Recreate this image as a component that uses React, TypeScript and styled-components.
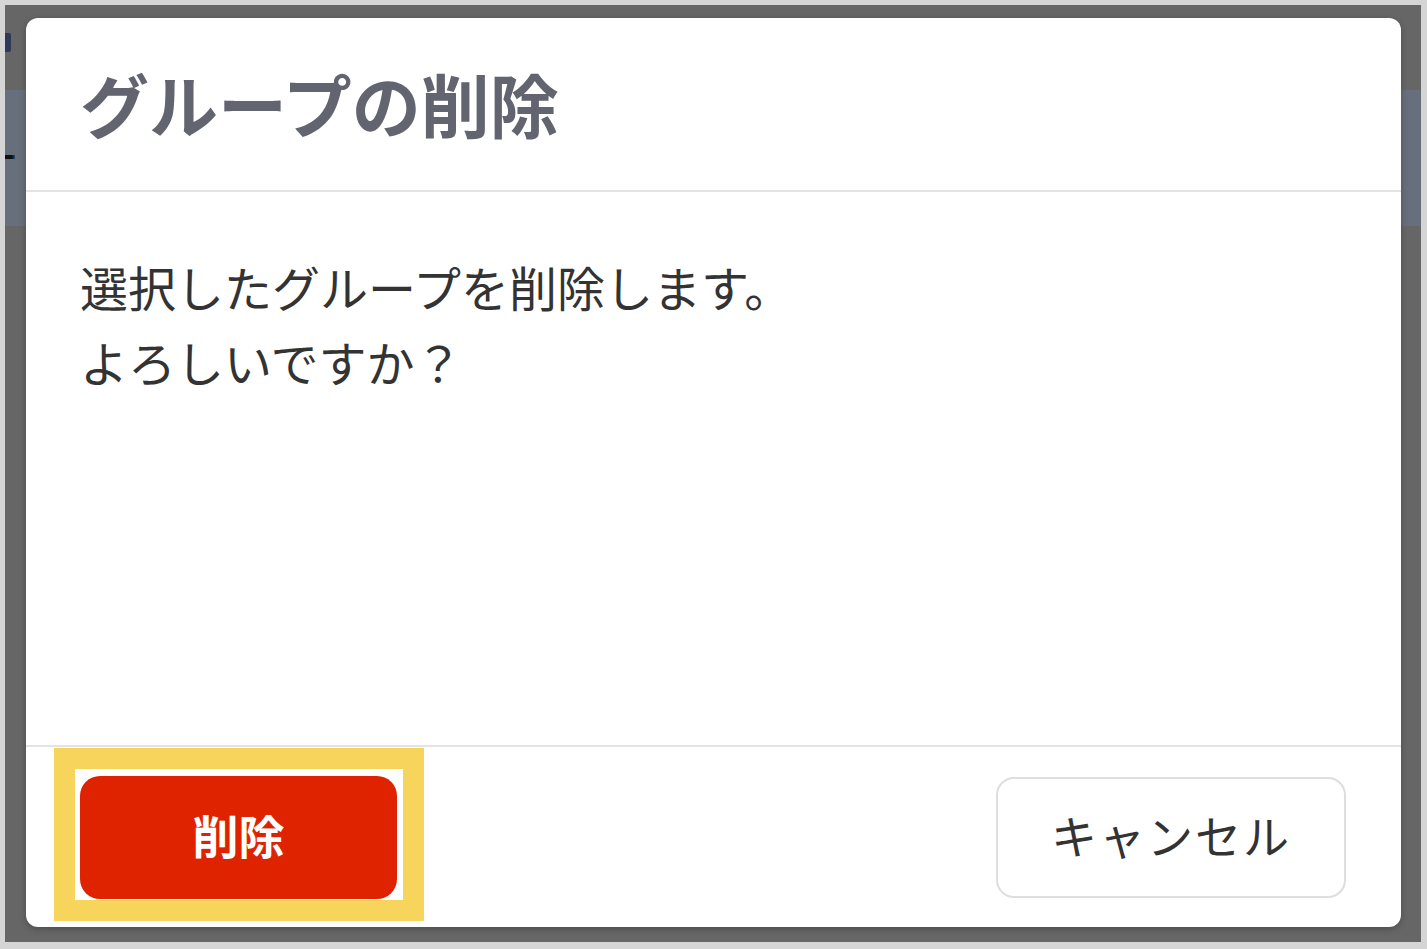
import styled, { createGlobalStyle } from 'styled-components';

const GlobalStyle = createGlobalStyle`
	html, body {
		margin: 0;
		padding: 0;
		background: #ffffff;
	}
	* {
		box-sizing: border-box;
	}
`

const Frame = styled.div`
	position: relative;
	width: 1427px;
	height: 949px;
	border-style: solid;
	border-color: #d5d5d5;
	border-width: 5px 6px 7px 5px;
	background-color: #666666;
	overflow: hidden;
	font-family: "Noto Sans CJK JP", "Noto Sans", sans-serif;
`

const PageBehind = styled.div`
	display: flex;
	flex-direction: column;
	width: 100%;
`

const TopBar = styled.div`
	height: 85px;
	padding-top: 28px;
	background-color: #666666;
`

const LogoStub = styled.div`
	width: 6px;
	height: 19px;
	background-color: #2f3a58;
	border-radius: 0 2px 2px 0;
`

const HeaderBand = styled.div`
	height: 136px;
	padding-top: 65px;
	background-color: #676f7c;
`

const Dash = styled.div`
	width: 10px;
	height: 4px;
	background: linear-gradient(to right, #111111 70%, #1f4f8a 100%);
`

const DialogLayer = styled.div`
	position: absolute;
	inset: 0;
	padding: 13px 20px 15px 21px;
	display: flex;
`

const Modal = styled.div`
	flex: 1;
	display: flex;
	flex-direction: column;
	background-color: #ffffff;
	border-radius: 12px;
	box-shadow: 0 2px 6px rgba(0, 0, 0, 0.25);
	overflow: hidden;
`

const Header = styled.div`
	height: 174px;
	display: flex;
	align-items: center;
	padding: 0 54px 2px;
	border-bottom: 2px solid #e3e3e3;
`

const Title = styled.h1`
	margin: 0;
	font-size: 69px;
	font-weight: 700;
	line-height: 1;
	color: #62656f;
	letter-spacing: 0;
`

const Body = styled.div`
	flex: 1;
	padding: 57px 54px 0;
`

const Message = styled.p`
	margin: 0;
	font-size: 48px;
	line-height: 75px;
	color: #333333;
`

const Footer = styled.div`
	height: 182px;
	display: flex;
	align-items: center;
	justify-content: space-between;
	padding: 0 55px 0 28px;
	border-top: 2px solid #e3e3e3;
`

const Highlight = styled.div`
	display: flex;
	border: 21px solid #f7d45c;
	background-color: #ffffff;
	padding: 7px 6px 1px 5px;
	margin-bottom: 5px;
`

type ButtonProps = {
	$variant: 'danger' | 'plain';
}

const Button = styled.button<ButtonProps>`
	display: flex;
	align-items: center;
	justify-content: center;
	font-family: inherit;
	font-size: 46px;
	line-height: 1;
	padding: 0 0 7px;
	cursor: pointer;
	width: ${props => props.$variant === 'danger' ? '317px' : '350px'};
	height: ${props => props.$variant === 'danger' ? '123px' : '121px'};
	border-radius: ${props => props.$variant === 'danger' ? '20px' : '18px'};
	font-weight: ${props => props.$variant === 'danger' ? 700 : 400};
	color: ${props => props.$variant === 'danger' ? '#ffffff' : '#333333'};
	background-color: ${props => props.$variant === 'danger' ? '#df2300' : '#ffffff'};
	border: ${props => props.$variant === 'danger' ? 'none' : '2px solid #dedede'};
	letter-spacing: ${props => props.$variant === 'danger' ? '0' : '2px'};
`

const App = () => {
	return (
		<>
			<GlobalStyle />
			<Frame>
				<PageBehind>
					<TopBar>
						<LogoStub />
					</TopBar>
					<HeaderBand>
						<Dash />
					</HeaderBand>
				</PageBehind>
				<DialogLayer>
					<Modal role="dialog">
						<Header>
							<Title>グループの削除</Title>
						</Header>
						<Body>
							<Message>選択したグループを削除します。</Message>
							<Message>よろしいですか？</Message>
						</Body>
						<Footer>
							<Highlight>
								<Button $variant="danger">削除</Button>
							</Highlight>
							<Button $variant="plain">キャンセル</Button>
						</Footer>
					</Modal>
				</DialogLayer>
			</Frame>
		</>
	);
};

export default App;
